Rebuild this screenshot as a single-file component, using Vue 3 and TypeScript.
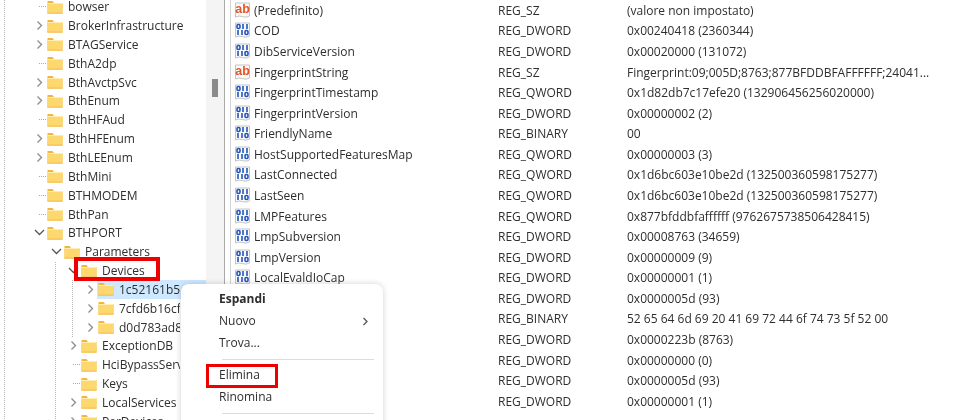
<script setup lang="ts">
type Node = { name: string; level: number; kind: 'closed' | 'open' | 'leaf'; selected?: boolean; clipped?: boolean }

const tree: Node[] = [
  { name: 'bowser', level: 0, kind: 'leaf' },
  { name: 'BrokerInfrastructure', level: 0, kind: 'closed' },
  { name: 'BTAGService', level: 0, kind: 'closed' },
  { name: 'BthA2dp', level: 0, kind: 'leaf' },
  { name: 'BthAvctpSvc', level: 0, kind: 'closed' },
  { name: 'BthEnum', level: 0, kind: 'closed' },
  { name: 'BthHFAud', level: 0, kind: 'leaf' },
  { name: 'BthHFEnum', level: 0, kind: 'closed' },
  { name: 'BthLEEnum', level: 0, kind: 'closed' },
  { name: 'BthMini', level: 0, kind: 'leaf' },
  { name: 'BTHMODEM', level: 0, kind: 'leaf' },
  { name: 'BthPan', level: 0, kind: 'leaf' },
  { name: 'BTHPORT', level: 0, kind: 'open' },
  { name: 'Parameters', level: 1, kind: 'open' },
  { name: 'Devices', level: 2, kind: 'open' },
  { name: '1c52161b5', level: 3, kind: 'closed', selected: true, clipped: true },
  { name: '7cfd6b16cf', level: 3, kind: 'closed', clipped: true },
  { name: 'd0d783ad8', level: 3, kind: 'closed', clipped: true },
  { name: 'ExceptionDB', level: 2, kind: 'closed', clipped: true },
  { name: 'HciBypassServ', level: 2, kind: 'leaf', clipped: true },
  { name: 'Keys', level: 2, kind: 'leaf', clipped: true },
  { name: 'LocalServices', level: 2, kind: 'closed', clipped: true },
  { name: 'PerDevices', level: 2, kind: 'closed', clipped: true },
]

type Value = { name: string; type: string; data: string }

const values: Value[] = [
  { name: '(Predefinito)', type: 'REG_SZ', data: '(valore non impostato)' },
  { name: 'COD', type: 'REG_DWORD', data: '0x00240418 (2360344)' },
  { name: 'DibServiceVersion', type: 'REG_DWORD', data: '0x00020000 (131072)' },
  { name: 'FingerprintString', type: 'REG_SZ', data: 'Fingerprint:09;005D;8763;877BFDDBFAFFFFFF;24041...' },
  { name: 'FingerprintTimestamp', type: 'REG_QWORD', data: '0x1d82db7c17efe20 (132906456256020000)' },
  { name: 'FingerprintVersion', type: 'REG_DWORD', data: '0x00000002 (2)' },
  { name: 'FriendlyName', type: 'REG_BINARY', data: '00' },
  { name: 'HostSupportedFeaturesMap', type: 'REG_QWORD', data: '0x00000003 (3)' },
  { name: 'LastConnected', type: 'REG_QWORD', data: '0x1d6bc603e10be2d (132500360598175277)' },
  { name: 'LastSeen', type: 'REG_QWORD', data: '0x1d6bc603e10be2d (132500360598175277)' },
  { name: 'LMPFeatures', type: 'REG_QWORD', data: '0x877bfddbfaffffff (9762675738506428415)' },
  { name: 'LmpSubversion', type: 'REG_DWORD', data: '0x00008763 (34659)' },
  { name: 'LmpVersion', type: 'REG_DWORD', data: '0x00000009 (9)' },
  { name: 'LocalEvaldIoCap', type: 'REG_DWORD', data: '0x00000001 (1)' },
  { name: '', type: 'REG_DWORD', data: '0x0000005d (93)' },
  { name: '', type: 'REG_BINARY', data: '52 65 64 6d 69 20 41 69 72 44 6f 74 73 5f 52 00' },
  { name: '', type: 'REG_DWORD', data: '0x0000223b (8763)' },
  { name: '', type: 'REG_DWORD', data: '0x00000000 (0)' },
  { name: '', type: 'REG_DWORD', data: '0x0000005d (93)' },
  { name: '', type: 'REG_DWORD', data: '0x00000001 (1)' },
]
</script>

<template>
  <div class="screen">
    <aside class="tree">
      <div class="guide guide-root"></div>
      <div class="guide guide-services"></div>
      <div class="guide guide-port"></div>
      <div class="guide guide-params"></div>
      <div
        v-for="node in tree"
        :key="node.name"
        class="tree-row"
        :class="`level-${node.level}`"
      >
        <span class="twist">
          <svg v-if="node.kind === 'closed'" width="9" height="11" viewBox="0 0 9 11">
            <path d="M2.500 1.500 6.500 5.500 2.500 9.500" class="chev" />
          </svg>
          <svg v-else-if="node.kind === 'open'" width="11" height="9" viewBox="0 0 11 9">
            <path d="M1 2 5.500 6.500 10 2" class="chev chev-open" />
          </svg>
          <span v-else class="stub"></span>
        </span>
        <span class="node" :class="{ selected: node.selected }">
          <svg class="folder" width="16" height="14" viewBox="0 0 16 14">
            <path d="M0.500 1h5l1.500 2h8.500v10.500h-15z" fill="#f5b53c" />
            <rect x="0.500" y="3" width="15" height="10.500" fill="#fdd86f" />
            <rect x="0.500" y="3" width="15" height="1" fill="#ffeeb0" />
            <rect x="0.500" y="12.500" width="15" height="1" fill="#f4c056" />
          </svg>
          <span class="node-name" :class="{ clipped: node.clipped, [`clip-${node.level}`]: node.clipped }">{{ node.name }}</span>
        </span>
      </div>
    </aside>

    <div class="scroll-track">
      <div class="scroll-thumb"></div>
    </div>
    <div class="splitter"></div>

    <main class="values">
      <div v-for="(v, i) in values" :key="i" class="value-row">
        <span class="cell-name">
          <svg v-if="v.name" class="reg-icon" width="17" height="17" viewBox="0 0 17 17">
            <path d="M1.500 1h14v13q-3.500 2-7 .6t-7 .4z" fill="#fafafa" stroke="#c4c4c4" />
            <text v-if="v.type === 'REG_SZ'" x="8.500" y="11" text-anchor="middle" class="ab">ab</text>
            <g v-else fill="none" stroke="#2456bd" stroke-width="1.600">
              <rect x="3" y="2.500" width="3" height="4" rx="1.200" />
              <path d="M9 2v5M13 2v5" />
              <path d="M4 8v5M8 8v5" />
              <rect x="11" y="8.500" width="3" height="4" rx="1.200" />
            </g>
          </svg>
          <span>{{ v.name }}</span>
        </span>
        <span class="cell-type">{{ v.type }}</span>
        <span class="cell-data">{{ v.data }}</span>
      </div>
    </main>

    <div class="menu">
      <div class="menu-item strong">Espandi</div>
      <div class="menu-item with-arrow">
        <span>Nuovo</span>
        <svg width="7" height="9" viewBox="0 0 7 9"><path d="M1.500 1 5 4.500 1.500 8" class="chev chev-dark" /></svg>
      </div>
      <div class="menu-item">Trova...</div>
      <div class="menu-sep"></div>
      <div class="menu-item">Elimina</div>
      <div class="menu-item">Rinomina</div>
      <div class="menu-sep"></div>
    </div>

    <div class="mark mark-devices"></div>
    <div class="mark mark-delete"></div>
  </div>
</template>

<style scoped>
.screen {
  position: relative;
  display: flex;
  width: 980px;
  height: 420px;
  overflow: hidden;
  background: #fff;
  color: #2e2e2e;
  font-family: "Open Sans", "Liberation Sans", sans-serif;
  font-size: 12px;
  filter: blur(0.3px);
}

.tree {
  position: relative;
  flex: 0 0 206px;
  margin-top: -2.700px;
  height: 440px;
}

.guide {
  position: absolute;
  width: 0;
  border-left: 1px dotted #b5b5b5;
}
.guide-root { left: 4px; top: 0; bottom: 0; }
.guide-services { left: 38px; top: 0; height: 245px; }
.guide-port { left: 55px; top: 250px; bottom: 0; }
.guide-params { left: 72px; top: 270px; bottom: 0; }

.tree-row {
  position: relative;
  display: flex;
  align-items: center;
  height: 18.850px;
  padding-left: 33px;
}
.level-1 { padding-left: 50px; }
.level-2 { padding-left: 67px; }
.level-3 { padding-left: 84px; }

.twist {
  display: flex;
  align-items: center;
  justify-content: center;
  flex: 0 0 13px;
  height: 100%;
  background: #fff;
  z-index: 1;
}
.twist svg { display: block; }
.stub {
  width: 7px;
  margin-left: 6px;
  border-top: 1px dotted #aaa;
}
.chev {
  fill: none;
  stroke: #8c8c8c;
  stroke-width: 1.300;
}
.chev-open { stroke: #555; }
.chev-dark { stroke: #555; }

.node {
  display: flex;
  align-items: center;
  flex: 1;
  height: 100%;
  padding-left: 1px;
  white-space: nowrap;
  overflow: hidden;
}
.node.selected { background: #cde8ff; }
.folder { flex: none; display: block; }
.node-name { margin-left: 5px; }
.clipped { overflow: hidden; }
.clip-3 { width: 61px; }
.clip-2 { width: 78px; }

.scroll-track {
  flex: 0 0 18px;
  display: flex;
  justify-content: center;
  box-sizing: border-box;
  padding-top: 79px;
  background: #f4f4f4;
}
.scroll-thumb {
  width: 6px;
  height: 18px;
  background: #8b8b8b;
}

.splitter {
  flex: 0 0 5px;
  border-left: 1px solid #a9a9a9;
  border-right: 1px solid #d4d4d4;
}

.values {
  flex: 1;
  padding-left: 3px;
}
.value-row {
  display: flex;
  align-items: center;
  height: 20.580px;
  white-space: nowrap;
}
.cell-name {
  display: flex;
  align-items: center;
  flex: 0 0 264px;
  gap: 3px;
}
.reg-icon { flex: none; display: block; }
.ab {
  font-family: "Liberation Sans", sans-serif;
  font-size: 12.500px;
  font-weight: 700;
  fill: #e0562a;
}
.cell-type { flex: 0 0 129px; }

.menu {
  position: absolute;
  z-index: 2;
  left: 181px;
  top: 284px;
  width: 202px;
  height: 160px;
  box-sizing: border-box;
  padding: 4px 0;
  background: #fff;
  border-radius: 8px;
  box-shadow: 0 0 6px rgba(0, 0, 0, 0.18);
}
.menu-item {
  height: 22.100px;
  line-height: 22.100px;
  padding: 0 14px 0 38px;
}
.strong { font-weight: 700; }
.with-arrow {
  display: flex;
  align-items: center;
  justify-content: space-between;
}
.menu-sep {
  height: 1px;
  margin: 5px 9px 4px 41px;
  background: #dcdcdc;
}

.mark {
  position: absolute;
  z-index: 3;
  box-sizing: border-box;
  border: 4px solid #ee0000;
}
.mark-devices { left: 74px; top: 257px; width: 86px; height: 24px; }
.mark-delete { left: 206px; top: 364px; width: 72px; height: 24px; border-width: 3px; }
</style>
